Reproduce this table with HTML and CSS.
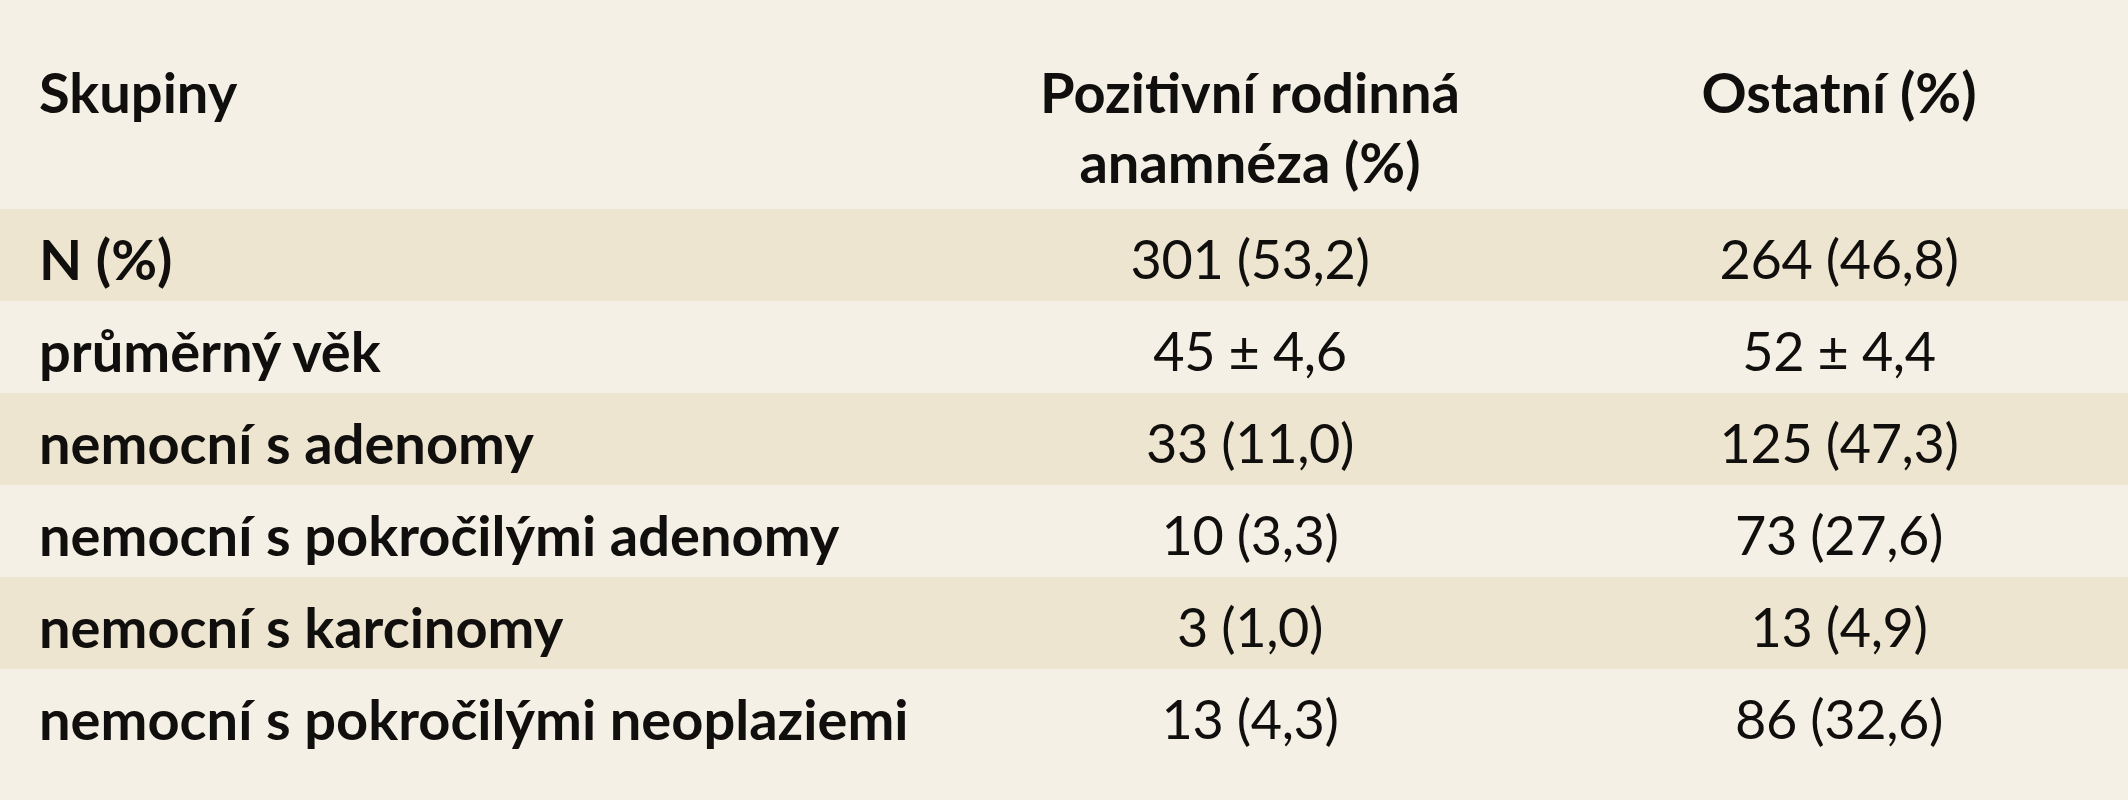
FILE: index.html
```html
<!DOCTYPE html>
<html lang="cs">
<head>
<meta charset="utf-8">
<title>Skupiny</title>
<link rel="stylesheet" href="styles.css">
</head>
<body>
<table class="data">
  <colgroup>
    <col class="c-label">
    <col class="c-pos">
    <col class="c-oth">
  </colgroup>
  <thead>
    <tr class="head">
      <th class="label">Skupiny</th>
      <th class="num">Pozitivní rodinná<br>anamnéza (%)</th>
      <th class="num">Ostatní (%)</th>
    </tr>
  </thead>
  <tbody>
    <tr class="dark"><td class="label">N (%)</td><td class="num">301 (53,2)</td><td class="num">264 (46,8)</td></tr>
    <tr class="light"><td class="label">průměrný věk</td><td class="num">45 ± 4,6</td><td class="num">52 ± 4,4</td></tr>
    <tr class="dark"><td class="label">nemocní s adenomy</td><td class="num">33 (11,0)</td><td class="num">125 (47,3)</td></tr>
    <tr class="light"><td class="label">nemocní s pokročilými adenomy</td><td class="num">10 (3,3)</td><td class="num">73 (27,6)</td></tr>
    <tr class="dark"><td class="label">nemocní s karcinomy</td><td class="num">3 (1,0)</td><td class="num">13 (4,9)</td></tr>
    <tr class="light"><td class="label">nemocní s pokročilými neoplaziemi</td><td class="num">13 (4,3)</td><td class="num">86 (32,6)</td></tr>
  </tbody>
</table>
</body>
</html>
```

FILE: styles.css
```css
html, body {
  margin: 0;
  padding: 0;
  background: #f4f0e5;
}
body {
  width: 2128px;
  height: 800px;
  overflow: hidden;
  font-family: Lato, "Open Sans", sans-serif;
  color: #100f0d;
}
.data {
  width: 2128px;
  border-collapse: collapse;
  table-layout: fixed;
}
.c-label { width: 950px; }
.c-pos { width: 600px; }
.c-oth { width: 578px; }

.data th, .data td {
  padding: 0;
  box-sizing: border-box;
}
.head th {
  height: 209px;
  padding-top: 57px;
  vertical-align: top;
  font-weight: 700;
  font-size: 56px;
  line-height: 70px;
}
.data .label {
  text-align: left;
  padding-left: 39px;
  font-weight: 700;
  font-size: 56px;
}
.num {
  text-align: center;
}
.data tbody td {
  height: 92px;
  padding-top: 8px;
  vertical-align: middle;
  line-height: 62px;
}
tbody td.num {
  font-weight: 400;
  font-size: 54px;
  letter-spacing: -0.4px;
}
.dark { background: #ede5d0; }
.light { background: #f4f0e5; }
```
